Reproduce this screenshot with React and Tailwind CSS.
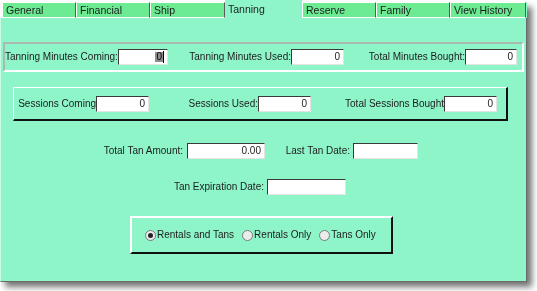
import React from 'react';

const tabs = [
    { name: 'General', w: 'w-[74px]' },
    { name: 'Financial', w: 'w-[74px]' },
    { name: 'Ship', w: 'w-[75px]' },
    { name: 'Tanning', w: 'w-[77px]', active: true },
    { name: 'Reserve', w: 'w-[74px]' },
    { name: 'Family', w: 'w-[74px]' },
    { name: 'View History', w: 'w-[76px]' },
];

function Field({ value = '', w = 'w-[53px]', focused = false }) {
    return (
        <div className={`${w} h-[16px] bg-white border-t border-l border-t-[#3a3a3a] border-l-[#3a3a3a] border-b border-r border-b-[#e4e4e4] border-r-[#e4e4e4] flex items-center justify-end pr-[3px] text-[10px] leading-none text-[#222]`}>
            {focused ? (
                <span className="flex items-center">
                    <span className="bg-[#8c8c8c] text-black px-[1px]">{value}</span>
                    <span className="w-[1px] h-[12px] bg-black"></span>
                </span>
            ) : (
                <span>{value}</span>
            )}
        </div>
    );
}

function Group({ label, w, children }) {
    return (
        <div className={`${w} flex items-center justify-end shrink-0`}>
            <span className="text-[10px] leading-none text-[#1c1c1c] whitespace-nowrap">{label}</span>
            {children}
        </div>
    );
}

function Radio({ label, checked }) {
    return (
        <label className="flex items-center gap-[1px] text-[10px] leading-none text-[#1c1c1c] whitespace-nowrap">
            <span className="w-[11px] h-[11px] rounded-full border border-[#7a7a7a] bg-[#ececec] flex items-center justify-center">
                {checked && <span className="w-[5px] h-[5px] rounded-full bg-[#222]"></span>}
            </span>
            <span>{label}</span>
        </label>
    );
}

export default function App() {
    return (
        <div className="w-[537px] h-[291px] bg-white overflow-hidden" style={{ fontFamily: '"Liberation Sans", Arial, sans-serif' }}>
            <div className="w-[527px] drop-shadow-[5px_5px_3px_rgba(0,0,0,0.55)]">
                {/* Tabs */}
                <div className="flex items-end h-[18px]">
                    <div className="w-[2px]"></div>
                    {tabs.map(tab => (
                        tab.active ? (
                            <div key={tab.name} className={`${tab.w} h-[18px] bg-[#8ef5c9] text-[10.5px] leading-none text-[#1c1c1c] pl-[3px] pt-[4px]`}>
                                {tab.name}
                            </div>
                        ) : (
                            <div key={tab.name} className={`${tab.w} h-[16px] bg-[#6ceb92] border-t border-l border-white border-r border-r-[#5a5a5a] border-b border-b-white text-[10.5px] leading-none text-[#1c1c1c] pl-[3px] pt-[2px]`}>
                                {tab.name}
                            </div>
                        )
                    ))}
                    <div className="w-[1px] h-[16px] bg-[#8ef5c9]"></div>
                </div>

                {/* Body */}
                <div className="h-[264px] bg-[#8ef5c9] border-l border-l-[#c8fbe4] border-r border-r-[#6a6a6a] border-b border-b-[#6a6a6a] flex flex-col">
                    {/* Minutes */}
                    <div className="mt-[24px] ml-[2px] w-[521px] h-[30px] border-2 border-t-[#a9b8b0] border-l-[#a9b8b0] border-b-white border-r-white flex items-center">
                        <Group label="Tanning Minutes Coming:" w="w-[163px]">
                            <Field value="0" focused />
                        </Group>
                        <Group label="Tanning Minutes Used:" w="w-[176px]">
                            <Field value="0" />
                        </Group>
                        <Group label="Total Minutes Bought:" w="w-[173px]">
                            <Field value="0" w="w-[52px]" />
                        </Group>
                    </div>

                    {/* Sessions */}
                    <div className="mt-[15px] ml-[12px] w-[495px] h-[34px] border-t border-l border-white border-b-2 border-r-2 border-b-[#111] border-r-[#111] flex items-center">
                        <Group label="Sessions Coming" w="w-[135px]">
                            <Field value="0" />
                        </Group>
                        <Group label="Sessions Used:" w="w-[162px]">
                            <Field value="0" />
                        </Group>
                        <Group label="Total Sessions Bought" w="w-[186px]">
                            <Field value="0" />
                        </Group>
                    </div>

                    {/* Amount / date */}
                    <div className="mt-[22px] flex items-center">
                        <Group label="Total Tan Amount:" w="w-[264px]">
                            <div className="w-[4px]"></div>
                            <Field value="0.00" w="w-[78px]" />
                        </Group>
                        <Group label="Last Tan Date:" w="w-[153px]">
                            <div className="w-[3px]"></div>
                            <Field w="w-[65px]" />
                        </Group>
                    </div>

                    <div className="mt-[20px] flex items-center">
                        <Group label="Tan Expiration Date:" w="w-[345px]">
                            <div className="w-[3px]"></div>
                            <Field w="w-[79px]" />
                        </Group>
                    </div>

                    {/* Radios */}
                    <div className="mt-[21px] ml-[129px] w-[263px] h-[38px] border-t-2 border-l-2 border-white border-b-2 border-r-2 border-b-[#111] border-r-[#111] flex items-center pl-[13px]">
                        <Radio label="Rentals and Tans" checked />
                        <div className="w-[8px]"></div>
                        <Radio label="Rentals Only" />
                        <div className="w-[8px]"></div>
                        <Radio label="Tans Only" />
                    </div>
                </div>
            </div>
        </div>
    );
}
